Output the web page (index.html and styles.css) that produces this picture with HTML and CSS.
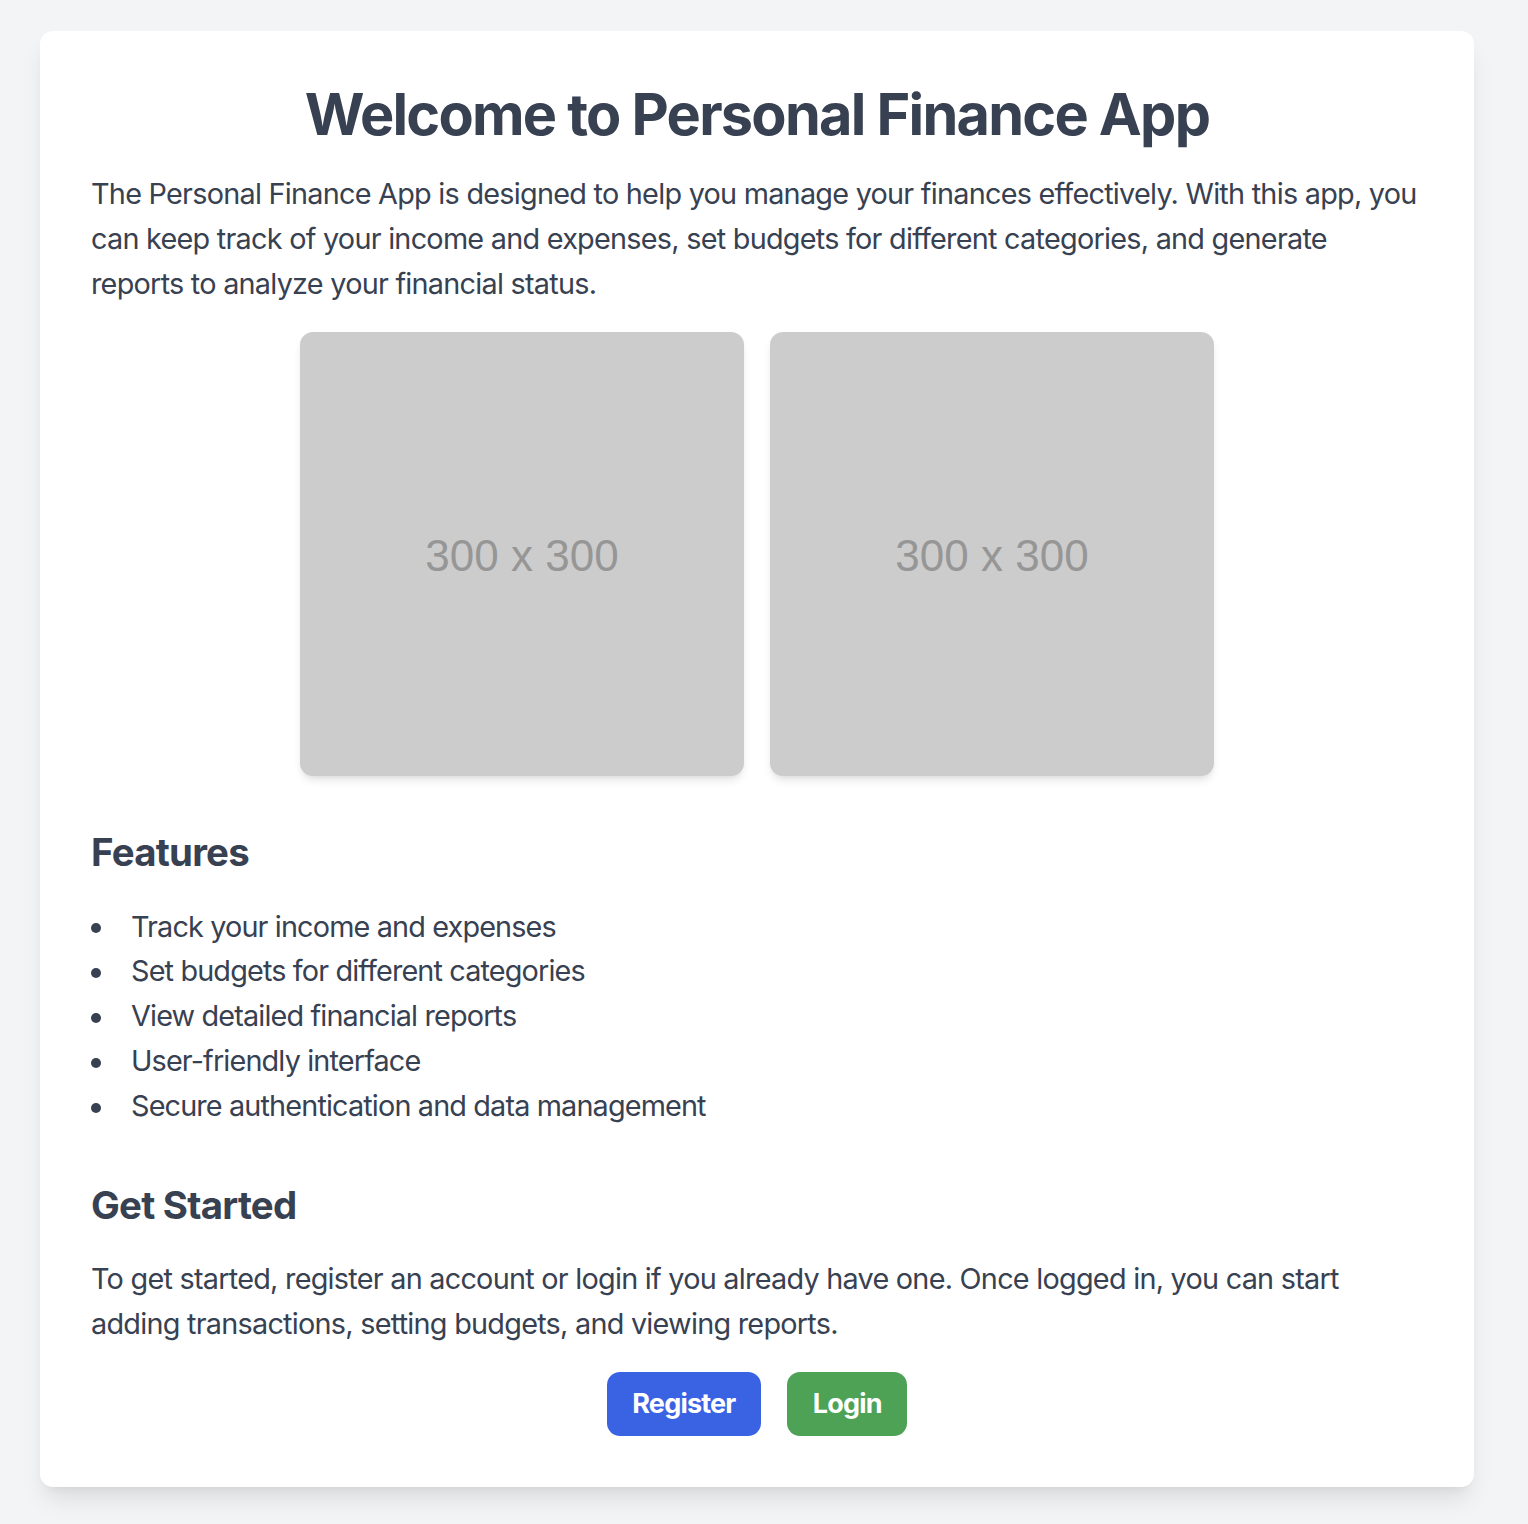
FILE: index.html
```html
<!DOCTYPE html>
<html lang="en">
<head>
<meta charset="utf-8">
<title>Personal Finance App</title>
<link rel="stylesheet" href="styles.css">
</head>
<body>
<main class="card">
  <h1 class="title">Welcome to Personal Finance App</h1>
  <p class="text intro">The Personal Finance App is designed to help you manage your finances effectively. With this app, you can keep track of your income and expenses, set budgets for different categories, and generate reports to analyze your financial status.</p>
  <div class="gallery">
    <div class="placeholder"><span>300 x 300</span></div>
    <div class="placeholder"><span>300 x 300</span></div>
  </div>
  <h2 class="heading">Features</h2>
  <ul class="features">
    <li>Track your income and expenses</li>
    <li>Set budgets for different categories</li>
    <li>View detailed financial reports</li>
    <li>User-friendly interface</li>
    <li>Secure authentication and data management</li>
  </ul>
  <h2 class="heading">Get Started</h2>
  <p class="text">To get started, register an account or login if you already have one. Once logged in, you can start adding transactions, setting budgets, and viewing reports.</p>
  <div class="actions">
    <a class="btn btn-blue" href="#">Register</a>
    <a class="btn btn-green" href="#">Login</a>
  </div>
</main>
</body>
</html>
```

FILE: styles.css
```css
* { box-sizing: border-box; }

html, body {
  margin: 0;
  padding: 0;
}

body {
  background: #f3f4f6;
  font-family: Inter, "Noto Sans", "Liberation Sans", sans-serif;
  color: #374151;
  padding: 31px 0 31px 40px;
}

.card {
  width: 1434px;
  background: #ffffff;
  border-radius: 13px;
  box-shadow: 0 16px 24px -5px rgba(0, 0, 0, 0.10), 0 6px 10px -6px rgba(0, 0, 0, 0.08);
  padding: 51px;
}

.title {
  margin: 0 0 26px;
  text-align: center;
  font-size: 57.6px;
  line-height: 64px;
  font-weight: 700;
  letter-spacing: -1.75px;
}

.text {
  margin: 0;
  font-size: 28.8px;
  line-height: 44.8px;
  letter-spacing: -0.74px;
}

.intro {
  margin-bottom: 26px;
}

.gallery {
  display: flex;
  justify-content: center;
  gap: 26px;
}

.placeholder {
  width: 444px;
  height: 444px;
  background: #cccccc;
  border-radius: 13px;
  box-shadow: 0 6px 10px -2px rgba(0, 0, 0, 0.10), 0 3px 6px -3px rgba(0, 0, 0, 0.08);
  display: flex;
  align-items: center;
  justify-content: center;
}

.placeholder span {
  font-family: "Liberation Sans", Arial, sans-serif;
  font-size: 44px;
  color: #969696;
  transform: translateY(2px);
}

.heading {
  margin: 51px 0 26px;
  font-size: 38.4px;
  line-height: 51.2px;
  font-weight: 700;
  letter-spacing: -0.75px;
}

.features {
  margin: 0;
  padding: 0;
  list-style: none;
  font-size: 28.8px;
  line-height: 44.8px;
  letter-spacing: -0.85px;
}

.features li {
  display: flex;
  align-items: center;
}

.features li::before {
  content: "";
  flex: none;
  width: 10px;
  height: 10px;
  margin: 3px 30px 0 0;
  border-radius: 50%;
  background: #374151;
}

.actions {
  margin-top: 26px;
  display: flex;
  justify-content: center;
  gap: 26px;
}

.btn {
  display: inline-block;
  height: 64px;
  padding: 0 25.6px;
  border-radius: 13px;
  color: #ffffff;
  font-size: 27px;
  line-height: 64px;
  font-weight: 700;
  letter-spacing: -0.8px;
  text-decoration: none;
}

.btn-blue { background: #3a63e3; }
.btn-green { background: #4ea256; }
```
